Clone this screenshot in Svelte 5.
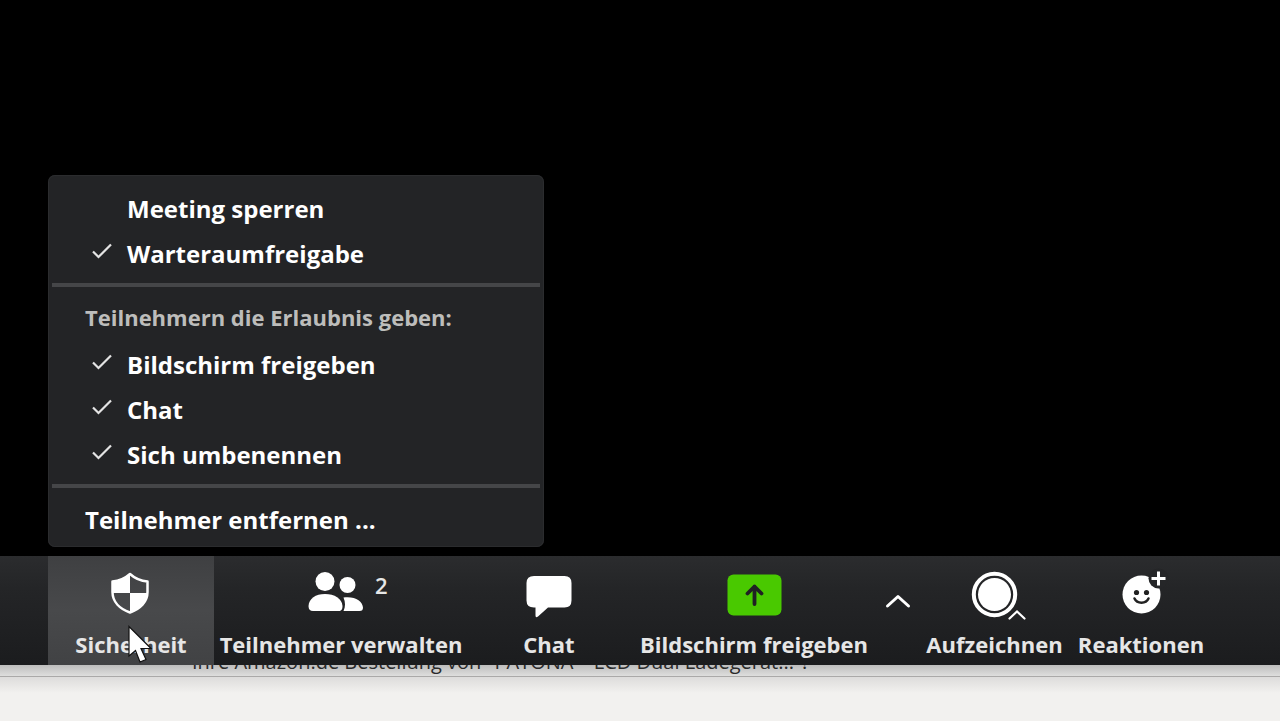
<script>
  let locks = [
    { id: "lock", label: "Meeting sperren", checked: false },
    { id: "waiting", label: "Warteraumfreigabe", checked: true },
  ];

  let permissions = [
    { id: "share", label: "Bildschirm freigeben", checked: true },
    { id: "chat", label: "Chat", checked: true },
    { id: "rename", label: "Sich umbenennen", checked: true },
  ];

  let participants = 2;
</script>

<div class="page">
  <main class="stage">
    <div class="menu">
      {#each locks as item (item.id)}
        <label class="item">
          <input type="checkbox" bind:checked={item.checked} />
          <svg class="tick" viewBox="0 0 24 24"><path d="M3 9.500 8.500 15 21 2.500" /></svg>
          <span>{item.label}</span>
        </label>
      {/each}
      <hr />
      <fieldset>
        <legend>Teilnehmern die Erlaubnis geben:</legend>
        {#each permissions as item (item.id)}
          <label class="item">
            <input type="checkbox" bind:checked={item.checked} />
            <svg class="tick" viewBox="0 0 24 24"><path d="M3 9.500 8.500 15 21 2.500" /></svg>
            <span>{item.label}</span>
          </label>
        {/each}
      </fieldset>
      <hr />
      <button class="remove">Teilnehmer entfernen ...</button>
    </div>
  </main>

  <nav class="toolbar">
    <button class="tool active">
      <svg class="icon" viewBox="0 0 96 52">
        <path
          d="M47 6C42 10.500 36 13 29.500 13.500V24C29.500 34 37 41 47 44.500C57 41 64.500 34 64.500 24V13.500C58 13 52 10.500 47 6Z"
          fill="none"
          stroke="#fff"
          stroke-width="2.500"
          stroke-linejoin="round"
        />
        <path d="M47 5.500V25H29V13.500C36 13 42 10 47 5.500Z" fill="#fff" />
        <path d="M47 25H65C64.500 35 57 41.500 47 45Z" fill="#fff" />
      </svg>
      <span class="label">Sicherheit</span>
      <svg class="cursor" viewBox="0 0 26 40">
        <path
          d="M2 1.500V31L8.500 25.500L13 37L19 34.500L14 23.500H24Z"
          fill="#fff"
          stroke="#111"
          stroke-width="1.200"
        />
      </svg>
    </button>

    <button class="tool">
      <span class="with-badge">
        <svg class="icon" viewBox="0 0 96 52" fill="#fff">
          <circle cx="32" cy="13.500" r="9.500" />
          <circle cx="54.500" cy="17" r="8" />
          <path d="M20 43C17 43 15.500 41.500 15.500 38C16 30.500 22.500 26 32 26S49 30.500 49.500 38C49.500 41.500 48.500 43 45.500 43Z" />
          <path d="M50.500 29.500C62 28 69.500 33 70 39.500C70 42 69 43 66.500 43H50.500C52.500 39 52.500 34 50.500 29.500Z" />
        </svg>
        <span class="badge">{participants}</span>
      </span>
      <span class="label">Teilnehmer verwalten</span>
    </button>

    <button class="tool">
      <svg class="icon" viewBox="0 0 96 52" fill="#fff">
        <path d="M33 8H63.500Q70.500 8 70.500 15V32.500Q70.500 39.500 63.500 39.500H47L37 48.500Q34.500 50.500 34.500 47.500V39.500H33Q25.500 39.500 25.500 32.500V15Q25.500 8 33 8Z" />
      </svg>
      <span class="label">Chat</span>
    </button>

    <button class="tool">
      <svg class="icon" viewBox="0 0 96 52">
        <rect x="21.500" y="6.500" width="54" height="41" rx="6" fill="#49c900" />
        <path
          d="M48.500 36V18.500M41.500 25.500 48.500 18.500 55.500 25.500"
          fill="none"
          stroke="#202123"
          stroke-width="3.800"
          stroke-linecap="round"
          stroke-linejoin="round"
        />
      </svg>
      <span class="label">Bildschirm freigeben</span>
    </button>

    <button class="tool" aria-label="Freigabeoptionen">
      <svg class="caret" viewBox="0 0 28 52">
        <path
          d="M3.500 38 14 28.500 24.500 38"
          fill="none"
          stroke="#fff"
          stroke-width="3"
          stroke-linecap="round"
          stroke-linejoin="round"
        />
      </svg>
    </button>

    <button class="tool">
      <svg class="icon" viewBox="0 0 96 52">
        <circle cx="47.500" cy="26.500" r="20.700" fill="none" stroke="#fff" stroke-width="4" />
        <circle cx="47.500" cy="26.500" r="16.500" fill="#fff" />
        <path
          d="M62.500 50.500 70 43.500 77.500 50.500"
          fill="none"
          stroke="#fff"
          stroke-width="2.200"
          stroke-linecap="round"
        />
      </svg>
      <span class="label">Aufzeichnen</span>
    </button>

    <button class="tool">
      <svg class="icon" viewBox="0 0 96 52">
        <circle cx="48.500" cy="26.500" r="19" fill="#fff" />
        <circle cx="65.500" cy="10.500" r="10" fill="#252628" />
        <path d="M65.500 3.500V17.500M58.500 10.500H72.500" stroke="#fff" stroke-width="3" />
        <circle cx="43.500" cy="24.500" r="2.600" fill="#222" />
        <circle cx="53.500" cy="24.500" r="2.600" fill="#222" />
        <path
          d="M41.500 30.500C44 36 53 36 55.500 30.500"
          fill="none"
          stroke="#222"
          stroke-width="2.500"
          stroke-linecap="round"
        />
      </svg>
      <span class="label">Reaktionen</span>
    </button>
  </nav>

  <footer class="mail">
    <p class="subject">Ihre Amazon.de Bestellung von "PATONA – LCD Dual Ladegerät..."!</p>
    <div class="mail-body"></div>
  </footer>
</div>

<style>
  :global(body) {
    margin: 0;
    background: #000;
  }

  .page {
    display: flex;
    flex-direction: column;
    min-height: 100vh;
    font-family: "Open Sans", "Noto Sans", sans-serif;
    font-size: 24px;
    font-weight: 700;
    color: #fff;
  }

  button {
    font: inherit;
    color: inherit;
    background: none;
    border: none;
    margin: 0;
    padding: 0;
  }

  .stage {
    flex: 1;
    display: flex;
    align-items: flex-end;
    padding: 0 48px 9px;
  }

  .menu {
    box-sizing: border-box;
    width: 496px;
    padding: 11px 0 5px;
    border-radius: 7px;
    background: #232426;
    box-shadow: inset 0 0 0 1px #2b2c2e;
    font-weight: 660;
  }

  .item {
    display: grid;
    grid-template-columns: 24px 1fr;
    column-gap: 13px;
    align-items: center;
    height: 45px;
    padding-left: 42px;
  }

  .item input {
    grid-area: 1 / 1;
    appearance: none;
    width: 24px;
    height: 24px;
    margin: 0;
  }

  .tick {
    grid-area: 1 / 1;
    width: 24px;
    height: 24px;
    fill: none;
    stroke: #e4e4e4;
    stroke-width: 2.2;
    visibility: hidden;
    pointer-events: none;
  }

  .item input:checked + .tick {
    visibility: visible;
  }

  hr {
    height: 4px;
    margin: 7px 4px 9px;
    border: none;
    background: #454648;
  }

  fieldset {
    margin: 0;
    padding: 0;
    border: none;
  }

  legend {
    padding: 0 0 4px 37px;
    font-size: 22px;
    font-weight: 700;
    line-height: 42px;
    color: #bdbdbb;
  }

  .remove {
    display: block;
    width: 100%;
    height: 45px;
    padding-left: 37px;
    text-align: left;
  }

  .toolbar {
    display: grid;
    grid-template-columns: 166fr 254fr 162fr 248fr 40fr 153fr 140fr;
    padding: 0 69px 0 48px;
    background: linear-gradient(#2b2c2e, #242527 30%, #1b1c1e);
    font-size: 22px;
    color: #e6e6e6;
  }

  .tool {
    position: relative;
    display: flex;
    flex-direction: column;
    align-items: center;
    gap: 10px;
    min-width: 0;
    height: 109px;
    padding-top: 12px;
  }

  .active {
    background: linear-gradient(#3f4042, #48494b 50%, #414244);
  }

  .icon,
  .caret {
    display: block;
    flex: none;
    width: 96px;
    height: 52px;
  }

  .caret {
    width: 28px;
  }

  .label {
    line-height: 28px;
    white-space: nowrap;
  }

  .with-badge {
    position: relative;
  }

  .badge {
    position: absolute;
    top: 3px;
    left: 82px;
    font-weight: 600;
    line-height: 28px;
  }

  .cursor {
    position: absolute;
    top: 69px;
    left: 79px;
    width: 26px;
    height: 40px;
  }

  .mail {
    height: 56px;
    overflow: hidden;
    background: #f2f1ef;
    font-size: 20px;
    font-weight: 400;
    color: #2a2a2a;
  }

  .subject {
    height: 14px;
    margin: -3px 0 0;
    padding-left: 192px;
    border-bottom: 1px solid #aaa9a8;
    background: linear-gradient(#b4b4b4, #dededd);
    line-height: 0;
    white-space: nowrap;
  }

  .mail-body {
    height: 44px;
    background: linear-gradient(#dddcdb, #f2f1ef 16px);
  }
</style>
